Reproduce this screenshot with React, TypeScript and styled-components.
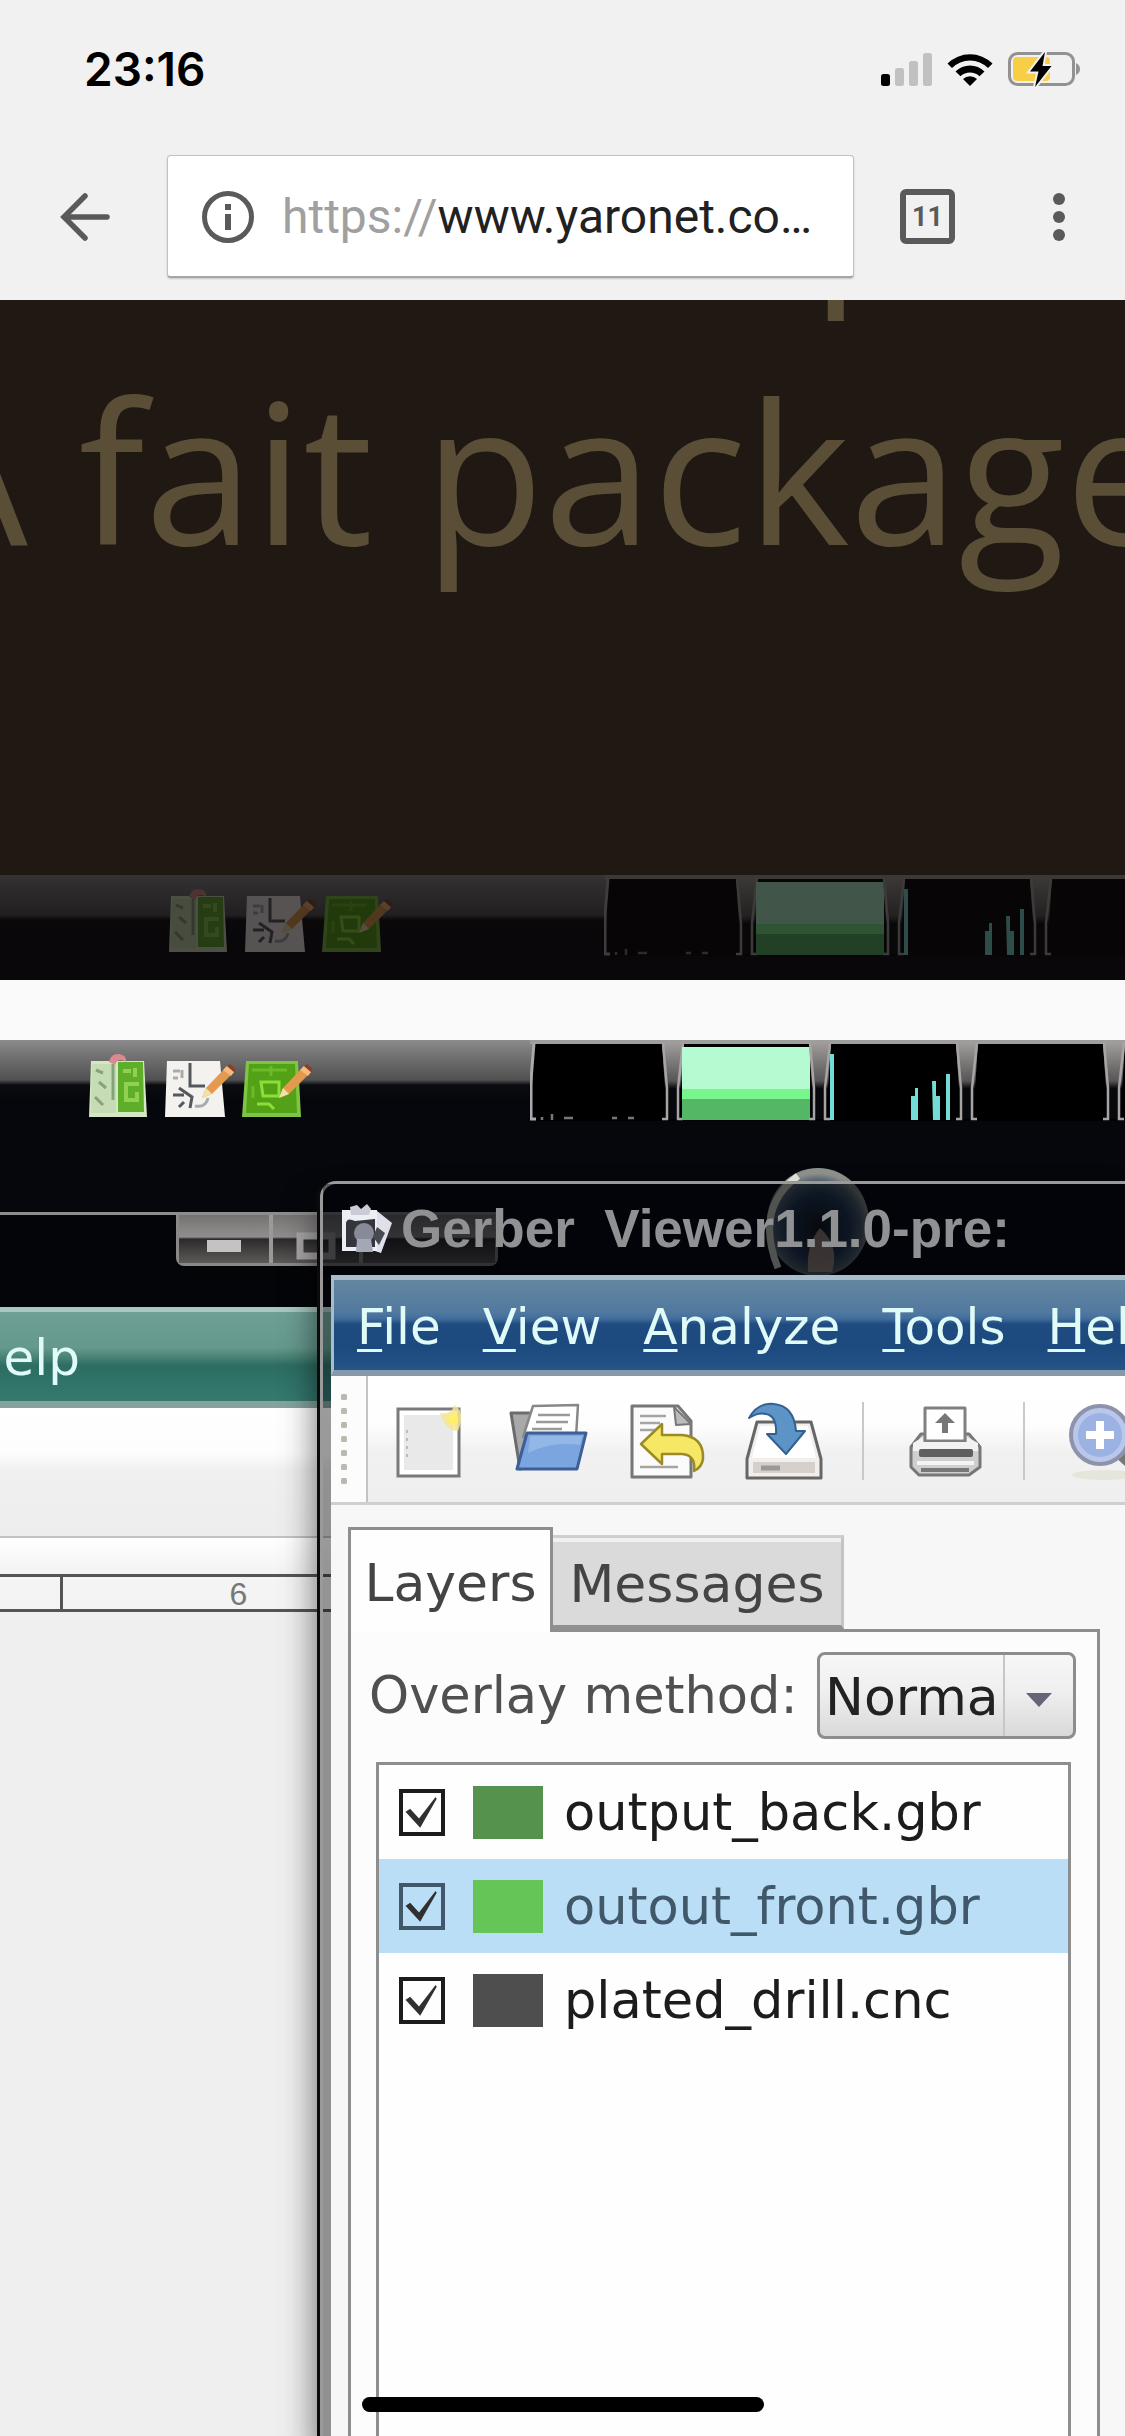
import React, { useState } from "react";
import styled, { createGlobalStyle, css } from "styled-components";

const UI = `"DejaVu Sans", sans-serif`;
const CHROME = `Roboto, "Liberation Sans", sans-serif`;

const Global = createGlobalStyle`
  * { box-sizing: border-box; }
  body { margin: 0; background: #fafafa; }
  button, select, input { font: inherit; color: inherit; margin: 0; }
  button { background: none; border: 0; padding: 0; }
`;

const Page = styled.div`
  position: relative;
  display: flex;
  flex-direction: column;
  min-height: 100vh;
  overflow: hidden;
`;

/* ---------- phone status bar and browser bar ---------- */

const TopArea = styled.header`
  background: #f1f1f1;
  height: 300px;
  flex: none;
  display: flex;
  flex-direction: column;
`;

const StatusBar = styled.div`
  height: 155px;
  padding: 0 44px 17px 84px;
  display: flex;
  align-items: center;
  justify-content: space-between;
`;

const Clock = styled.time`
  font: 600 46px/54px Inter, sans-serif;
  color: #000;
`;

const StatusIcons = styled.div`
  display: flex;
  align-items: center;
  gap: 15px;
`;

const BrowserBar = styled.div`
  display: flex;
  align-items: center;
  padding: 0 60px 0 58px;
`;

const IconButton = styled.button`
  display: grid;
  place-items: center;
  flex: none;
`;

const AddressBox = styled.button`
  flex: 1;
  min-width: 0;
  height: 123px;
  margin: 0 46px 0 55px;
  padding: 2px 36px 0 33px;
  display: flex;
  align-items: center;
  gap: 27px;
  background: #fff;
  border: 1px solid #c2c2c2;
  border-bottom: 2px solid #a5a5a5;
  border-radius: 4px;
  box-shadow: 0 1px 2px rgba(0, 0, 0, 0.18);
`;

const Url = styled.span`
  display: flex;
  font: 400 48px/60px ${CHROME};
  white-space: nowrap;
`;

const Scheme = styled.span`
  color: #a0a0a0;
`;

const Host = styled.span`
  color: #212121;
`;

const TabCount = styled.button`
  flex: none;
  width: 55px;
  height: 55px;
  margin-right: 98px;
  border: 6px solid #5a5a5a;
  border-radius: 6px;
  font: 700 27px/42px ${CHROME};
  color: #5a5a5a;
  text-align: center;
`;

/* ---------- page content ---------- */

const Quote = styled.section`
  flex: none;
  height: 680px;
  background: #201812;
  overflow: hidden;
  display: flex;
  flex-direction: column;
  justify-content: space-between;
`;

const QuoteText = styled.div`
  margin: -237px 0 0 -96px;
  font: 400 196px/271px "Open Sans", "Noto Sans", sans-serif;
  color: #5a4e36;
  white-space: nowrap;
`;

const QuoteLine = styled.p<{ $indent?: number }>`
  margin: 0;
  padding-left: ${(p) => p.$indent ?? 0}px;
`;

const DimStrip = styled.div`
  background: #0b0808;
  height: 105px;
  overflow: hidden;

  & > * {
    opacity: 0.32;
  }
`;

const Gap = styled.div`
  flex: none;
  height: 60px;
  background: #fafafa;
`;

const Desktop = styled.main`
  position: relative;
  flex: 1;
  min-height: 1396px;
  overflow: hidden;
  background: #05070c;
`;

const Panel = styled.div<{ $start: number; $gap: number }>`
  height: 105px;
  display: flex;
  padding-left: ${(p) => p.$start}px;
  gap: ${(p) => p.$gap}px;
  background: linear-gradient(#8c8c8c 0, #787878 12px, #505050 40px, #0a0c0f 45px, #05070c 60px);

  & > svg {
    flex: none;
  }
`;

/* ---------- windows ---------- */

const Orb = styled.svg`
  position: absolute;
  left: 764px;
  top: 124px;
`;

const BackWindow = styled.section`
  position: absolute;
  left: 0;
  top: 172px;
  bottom: 0;
  width: 500px;
  display: flex;
  flex-direction: column;
  border-top: 3px solid #8d8d8d;
  background: #efefef;
`;

const BackTitle = styled.div`
  height: 92px;
  background: #040508;
  display: flex;
  justify-content: flex-end;
  align-items: flex-start;
  padding-right: 2px;
`;

const WindowButtons = styled.div`
  display: flex;
  border: 3px solid #8c8888;
  border-top: 0;
  border-radius: 0 0 8px 8px;
`;

const WindowButton = styled.button`
  width: 90px;
  height: 48px;
  display: grid;
  place-items: center;
  padding-top: 14px;
  background: linear-gradient(#757272 0, #918e8e 22px, #2c2b2b 24px, #5c5959 48px);

  & + & {
    border-left: 4px solid #9b9898;
  }
  &:last-child {
    width: 136px;
  }
`;

const MenuBar = styled.nav<{ $tone: "teal" | "blue" }>`
  display: flex;
  align-items: center;
  height: 101px;
  padding-top: 3px;
  font: 400 50px/60px ${UI};
  color: #dffaf7;
  white-space: nowrap;
  overflow: hidden;
  ${(p) =>
    p.$tone === "teal"
      ? css`
          border-top: 5px solid #a9c7c0;
          border-bottom: 7px solid #84a39d;
          background: linear-gradient(#6f9f95 0, #65998d 40%, #458073 52%, #2d6d62 60%, #35796f);
        `
      : css`
          padding-left: 23px;
          gap: 42px;
          border-top: 5px solid #a9bccb;
          border-left: 3px solid #a9bccb;
          border-bottom: 6px solid #8699aa;
          background: linear-gradient(#64879f 0, #51799f 36%, #416d9d 43%, #1f4b80 49%, #1c4a7e 75%, #265488);
        `}
`;

const MenuItem = styled.button`
  flex: none;
`;

const Mnemonic = styled.span`
  text-decoration: underline;
  text-decoration-thickness: 3px;
  text-underline-offset: 5px;
  text-decoration-skip-ink: none;
`;

const BackMenuItem = styled(MenuItem)`
  margin-left: -34px;
`;

const BackToolbar = styled.div`
  height: 130px;
  border-bottom: 2px solid #c2c2c2;
  background: linear-gradient(#ffffff 0, #fdfdfd 45px, #f0f0f0 62px, #ededed);
`;

const RulerGap = styled.div`
  height: 36px;
  background: linear-gradient(#fff, #f3f3f3);
`;

const Ruler = styled.div`
  height: 38px;
  border: solid #555;
  border-width: 3px 0;
  background: #f4f4f4;
  padding-left: 60px;
`;

const RulerCell = styled.div`
  height: 100%;
  width: 354px;
  border-left: 3px solid #555;
  text-align: center;
  font: 400 32px/34px "Liberation Sans", sans-serif;
  color: #777;
`;

const FrontWindow = styled.section`
  position: absolute;
  left: 320px;
  right: 0;
  top: 141px;
  bottom: 0;
  display: flex;
  flex-direction: column;
  padding-left: 8px;
  border: solid #9a9a9a;
  border-width: 3px 0 0 3px;
  border-radius: 16px 0 0 0;
  background: rgba(3, 5, 9, 0.4);
  box-shadow: -3px 0 0 #0b0b0b, -4px 24px 34px rgba(0, 0, 0, 0.55);
`;

const TitleBar = styled.div`
  flex: none;
  height: 91px;
  margin-left: -8px;
  padding: 0 0 2px 16px;
  display: flex;
  align-items: center;
  gap: 7px;
  background: rgba(2, 3, 6, 0.42);
`;

const Title = styled.h1`
  margin: 0;
  font: 700 53px/60px "Liberation Sans", Arial, sans-serif;
  color: #909193;
  white-space: pre;
`;

const Client = styled.div`
  flex: 1;
  min-height: 0;
  display: flex;
  flex-direction: column;
  background: #f7f7f7;
`;

const Toolbar = styled.div`
  flex: none;
  height: 129px;
  display: flex;
  align-items: center;
  border-bottom: 3px solid #cfcfcf;
  background: linear-gradient(#ffffff 0, #fefefe 38%, #f1f1f1 60%, #efefef);
  overflow: hidden;
`;

const Grip = styled.div`
  flex: none;
  align-self: stretch;
  width: 37px;
  padding: 17px 0 0 9px;
  border-right: 2px solid #c4c4c4;
  background: #fcfcfc;
`;

const Tools = styled.div`
  display: flex;
  align-items: center;
  gap: 38px;
  padding: 4px 0 0 22px;
`;

const ToolDivider = styled.span`
  flex: none;
  width: 2px;
  height: 78px;
  margin-right: 3px;
  background: #c9c9c9;
`;

const Tabs = styled.div`
  flex: none;
  display: flex;
  align-items: flex-end;
  padding: 22px 0 0 17px;
`;

const Tab = styled.button<{ $active?: boolean }>`
  font: 400 52px/62px ${UI};
  border: solid #8e8e8e;
  color: #444;
  ${(p) =>
    p.$active
      ? css`
          width: 205px;
          height: 105px;
          margin-bottom: -3px;
          padding-top: 3px;
          border-width: 3px 3px 0 3px;
          background: #fefefe;
          z-index: 1;
        `
      : css`
          width: 291px;
          height: 94px;
          padding-top: 5px;
          border-width: 3px 3px 4px 0;
          border-color: #cfcfcf #c4c4c4 #909090;
          background: #dadada;
          box-shadow: inset 0 4px 0 #f0f0f0;
        `}
`;

const TabPanel = styled.div`
  flex: 1;
  display: flex;
  flex-direction: column;
  margin: 0 25px 0 17px;
  padding: 20px 21px 0 18px;
  border: 3px solid #8e8e8e;
  border-bottom: 0;
  background: #fcfcfc;
`;

const Field = styled.div`
  display: flex;
  align-items: center;
  justify-content: space-between;
  padding-bottom: 23px;
  font: 400 51px/62px ${UI};
  color: #505050;
  white-space: nowrap;
`;

const SelectWrap = styled.div`
  position: relative;
  width: 259px;
  height: 87px;
  flex: none;
`;

const Select = styled.select`
  appearance: none;
  width: 100%;
  height: 100%;
  padding: 2px 0 0 5px;
  border: 3px solid #8d8d8d;
  border-radius: 8px;
  background: linear-gradient(#f7f7f7, #efefef 45%, #d9d9d9);
  font-size: 52px;
  color: #222;
`;

const SelectArrow = styled.span`
  position: absolute;
  right: 3px;
  top: 3px;
  bottom: 3px;
  width: 70px;
  display: grid;
  place-items: center;
  padding-top: 9px;
  border-left: 2px solid #c6c6c6;
  pointer-events: none;
`;

const LayerList = styled.ul`
  flex: 1;
  margin: 0 5px 0 7px;
  padding: 0;
  list-style: none;
  border: 3px solid #8e8e8e;
  border-bottom: 0;
  background: #fefefe;
`;

const LayerRow = styled.li<{ $selected?: boolean }>`
  height: 94px;
  display: flex;
  align-items: center;
  padding-left: 20px;
  background: ${(p) => (p.$selected ? "#b9def5" : "transparent")};
  color: ${(p) => (p.$selected ? "#40586a" : "#1c1c1c")};
`;

const Check = styled.input`
  appearance: none;
  width: 46px;
  height: 47px;
  border: 4px solid currentColor;
  background: no-repeat center / 38px 38px
    url("data:image/svg+xml,%3Csvg xmlns='http://www.w3.org/2000/svg' viewBox='0 0 38 38'%3E%3Cpath d='M4 19L7 17L16 27L33 5L17 33Z' fill='%23303030' stroke='%23303030' stroke-width='2'/%3E%3C/svg%3E");

  &:not(:checked) {
    background: none;
  }
`;

const Swatch = styled.span<{ $color: string }>`
  width: 70px;
  height: 53px;
  margin: 0 21px 0 28px;
  background: ${(p) => p.$color};
`;

const LayerName = styled.label`
  padding-top: 2px;
  font: 400 51px/62px ${UI};
`;

const HomeIndicator = styled.div`
  position: absolute;
  left: 362px;
  bottom: 24px;
  width: 402px;
  height: 15px;
  border-radius: 8px;
  background: #000;
`;

/* ---------- drawings ---------- */

const Signal = () => (
  <svg width="51" height="33" viewBox="0 0 51 33" aria-hidden>
    <rect x="0" y="21" width="9" height="12" rx="2.5" fill="#000" />
    <g fill="#c1c1c1">
      <rect x="14" y="15" width="9" height="18" rx="2.5" />
      <rect x="28" y="8" width="9" height="25" rx="2.5" />
      <rect x="42" y="0" width="9" height="33" rx="2.5" />
    </g>
  </svg>
);

const Wifi = () => (
  <svg width="46" height="33" viewBox="0 0 46 33" aria-hidden>
    <path d="M0.500 10.500A32 32 0 0 1 45.500 10.500L41 15A25.500 25.500 0 0 0 5 15Z" />
    <path d="M8.500 18.500A20.500 20.500 0 0 1 37.500 18.500L32.500 23.200A14 14 0 0 0 13.500 23.200Z" />
    <path d="M16 26A10 10 0 0 1 30 26L23 33Z" />
  </svg>
);

const Battery = () => (
  <svg width="73" height="36" viewBox="0 0 73 36" aria-hidden>
    <rect x="1.500" y="2.500" width="64" height="31" rx="8" fill="none" stroke="#929292" strokeWidth="3" />
    <path d="M68 12Q72 14 72 18T68 24Z" fill="#929292" />
    <rect x="5" y="6" width="37" height="24" rx="4" fill="#f8ce46" />
    <path d="M37 1L22 20.500H30.500L27 36L43.500 15H34.500Z" fill="#000" stroke="#f1f1f1" strokeWidth="4" paintOrder="stroke" />
  </svg>
);

const BackArrow = () => (
  <svg width="54" height="54" viewBox="0 0 54 54" fill="none" stroke="#5a5a5a" strokeWidth="5.500" strokeLinecap="round" aria-hidden>
    <path d="M49 27H6M27 6L6 27L27 48" />
  </svg>
);

const InfoSvg = styled.svg`
  flex: none;
`;

const Info = () => (
  <InfoSvg width="54" height="54" viewBox="0 0 54 54" aria-hidden>
    <circle cx="27" cy="27" r="23.500" fill="none" stroke="#5a5a5a" strokeWidth="5" />
    <path d="M24 14h6v6h-6zM24 24h6v16h-6z" fill="#5a5a5a" />
  </InfoSvg>
);

const Dots = () => (
  <svg width="12" height="48" viewBox="0 0 12 48" fill="#5a5a5a" aria-hidden>
    <circle cx="6" cy="6" r="6" />
    <circle cx="6" cy="24" r="6" />
    <circle cx="6" cy="42" r="6" />
  </svg>
);

const Pencil = ({ x }: { x: number }) => (
  <g transform={`translate(${x} 0)`}>
    <path d="M62 26L69 32L47 54L37 58L41 48Z" fill="#e39a4e" />
    <path d="M62 26L69 32L66 36L58 30Z" fill="#f6b980" />
    <path d="M41 48L47 54L37 58Z" fill="#f3e2a8" />
    <path d="M69 32L71 29L65 24L62 26Z" fill="#8a4226" />
  </g>
);

const LauncherIcons = () => (
  <svg width="226" height="90" viewBox="0 0 226 90" aria-hidden>
    <path d="M2 21H55L58 77H0Z" fill="#d5e8c4" />
    <path d="M3 24H27V73H2Z" fill="#c6dcb4" />
    <path d="M29 22H54L55 72H29Z" fill="#5fae2b" />
    <path d="M7 30l7 3M10 42l7 6M6 57l8 8M24 24v36" stroke="#86a37a" strokeWidth="3" fill="none" />
    <path d="M50 44H37V60H48V52M34 31h8M46 28v9" stroke="#92d050" strokeWidth="4" fill="none" />
    <path d="M20 22Q22 13 30 14T37 22Q29 17 26 25Z" fill="#d98a8c" />
    <path d="M78 21H131L136 77H76Z" fill="#f4f2ef" />
    <path d="M101 23V46H116M84 55H95M90 48L103 57L101 68M90 67L95 62" stroke="#55585c" strokeWidth="3" fill="none" />
    <path d="M84 31h7M93 30v8M84 38h5M106 66q11 2 13-8" stroke="#a9abad" strokeWidth="3" fill="none" />
    <Pencil x={76} />
    <path d="M157 21H209L212 77H153Z" fill="#7fc444" />
    <path d="M160 24H206L208 73H157Z" fill="#52a117" />
    <path d="M172 42H190V56H174ZM168 64h12l5 5" stroke="#8ede38" strokeWidth="3" fill="none" />
    <path d="M163 30H198M164 46v12M182 26v10" stroke="#6bba28" strokeWidth="3" fill="none" />
    <Pencil x={153} />
  </svg>
);

const Divider = ({ x }: { x: number }) => (
  <g>
    <path d={`M${x} 3H${x + 22}L${x + 17} 79H${x + 5}Z`} fill="url(#sep)" />
    <path
      d={`M${x + 1} 3L${x + 5} 48V79H${x}M${x + 21} 3L${x + 16} 48V79H${x + 21}`}
      fill="none"
      stroke="#a8a4a5"
      strokeWidth="2.500"
    />
  </g>
);

const Graphs = () => (
  <svg width="740" height="90" viewBox="0 0 740 90" aria-hidden>
    <defs>
      <linearGradient id="sep" x1="0" y1="0" x2="0" y2="1">
        <stop offset="0" stopColor="#a09c9c" />
        <stop offset="0.500" stopColor="#575555" />
        <stop offset="0.600" stopColor="#07080b" />
      </linearGradient>
    </defs>
    <rect x="3" y="3" width="737" height="78" fill="#000" />
    <rect width="740" height="4" fill="#a09d9d" />
    <path d="M4 3L1 40V79H6" fill="none" stroke="#aaa" strokeWidth="3" />
    <path d="M12 77v3M22 74v6M34 78h9M82 78h5M98 78h6" stroke="#777" strokeWidth="2.500" />
    <Divider x={132} />
    <rect x="152" y="7" width="128" height="42" fill="#b4fbd1" />
    <rect x="152" y="49" width="128" height="10" fill="#78f58d" />
    <rect x="152" y="59" width="128" height="21" fill="#54b766" />
    <Divider x={279} />
    <g fill="#74dcd6">
      <rect x="300" y="14" width="4" height="66" />
      <path d="M381 56h4v-8h3v32h-7zM402 41h4v15h4v24h-7zM416 34h4v46h-4z" />
    </g>
    <Divider x={426} />
    <Divider x={573} />
  </svg>
);

const SystemPanel = ({ start, gap }: { start: number; gap: number }) => (
  <Panel $start={start} $gap={gap}>
    <LauncherIcons />
    <Graphs />
  </Panel>
);

const OrbDrawing = () => (
  <Orb width="108" height="112" viewBox="0 0 108 112" aria-hidden>
    <defs>
      <radialGradient id="orb" cx="0.500" cy="0.550" r="0.500">
        <stop offset="0" stopColor="#14161a" />
        <stop offset="0.600" stopColor="#1f3a55" />
        <stop offset="0.850" stopColor="#4e6272" />
        <stop offset="1" stopColor="#8f918c" />
      </radialGradient>
    </defs>
    <ellipse cx="54" cy="58" rx="51" ry="54" fill="url(#orb)" />
    <path d="M44 108Q42 80 56 64Q76 82 68 108Z" fill="#c0a48e" opacity="0.800" />
    <path d="M14 104Q-10 44 34 12" fill="none" stroke="#e4e8da" strokeWidth="7" />
  </Orb>
);

const AppIcon = () => (
  <svg width="55" height="52" viewBox="0 0 55 52" aria-hidden>
    <path d="M38 8L53 20L42 50L30 46Z" fill="#dfe0ea" />
    <path d="M3 7H38V48H3Z" fill="#eceef6" />
    <path d="M7 20Q8 14 16 18L36 16V44H7Z" fill="#34363c" />
    <path d="M11 4L18 2L22 6L28 1L32 6L30 12H12Z" fill="#c9cbd6" />
    <circle cx="25" cy="30" r="10" fill="#878b99" />
    <path d="M18 36H32L34 49H17Z" fill="#a4a8b6" />
    <path d="M38 24L46 30L40 42L34 34Z" fill="#484a52" />
  </svg>
);

const GripDots = () => (
  <svg width="14" height="96" viewBox="0 0 14 96" fill="#b9b9b0" aria-hidden>
    {[4, 18, 32, 46, 60, 74, 88].map((y) => (
      <rect key={y} x="1" y={y - 3} width="6" height="6" rx="1.500" />
    ))}
  </svg>
);

const NewIcon = () => (
  <svg width="80" height="80" viewBox="0 0 80 80" aria-hidden>
    <rect x="8" y="8" width="61" height="67" fill="#fff" stroke="#7a7a7a" strokeWidth="3" />
    <rect x="14" y="14" width="49" height="55" fill="#e9e9e9" />
    <path d="M17 29v30" stroke="#bbb" strokeWidth="2" strokeDasharray="3 5" />
    <path d="M50 12Q62 14 64 4Q76 10 68 30Q56 30 50 12Z" fill="#f6e58c" opacity="0.850" />
    <circle cx="63" cy="18" r="5" fill="#fff16a" />
  </svg>
);

const OpenIcon = () => (
  <svg width="80" height="80" viewBox="0 0 80 80" strokeLinejoin="round" aria-hidden>
    <path d="M3 12H22L26 16H40V60L12 68Z" fill="#a9a9a9" stroke="#6c6c6c" strokeWidth="3" />
    <path d="M25 5L70 4L68 36H15Z" fill="#fff" stroke="#888" strokeWidth="2.500" />
    <path d="M30 14H62M28 21H60M24 28h30" stroke="#999" strokeWidth="2.500" />
    <path d="M19 32H78L69 68H9Z" fill="#7ba5de" stroke="#3c5f96" strokeWidth="3" />
    <path d="M22 35H74L72 44Q44 40 20 52Z" fill="#93b8e8" />
  </svg>
);

const RevertIcon = () => (
  <svg width="80" height="80" viewBox="0 0 80 80" strokeLinejoin="round" aria-hidden>
    <path d="M6 5H52L65 20V76H6Z" fill="#fbfbfb" stroke="#777" strokeWidth="3" />
    <path d="M48 6L50 24L65 23Z" fill="#bbb" stroke="#777" strokeWidth="2" />
    <path d="M14 15H40M14 22H34M14 29h22M14 66H52" stroke="#a5a5a5" strokeWidth="2.500" />
    <path d="M15 43L36 23V34H56Q78 36 77 58Q76 66 68 70Q70 54 56 53H36V63Z" fill="#f6e765" stroke="#9a8a28" strokeWidth="2.500" />
  </svg>
);

const SaveIcon = () => (
  <svg width="80" height="80" viewBox="0 0 80 80" strokeLinejoin="round" aria-hidden>
    <path d="M13 21H67L77 58V77H3V58Z" fill="#f1eeec" stroke="#666" strokeWidth="3" />
    <path d="M16 25H64L72 57H8Z" fill="#fff" />
    <rect x="9" y="61" width="62" height="11" fill="#d6d0cc" />
    <path d="M17 67H36" stroke="#999" strokeWidth="5" />
    <path d="M5 17Q14 1 30 3Q50 5 52 30H61L42 53L23 33H32Q33 15 22 13Q14 11 5 17Z" fill="#5c94c8" stroke="#33618f" strokeWidth="2" />
  </svg>
);

const PrintIcon = () => (
  <svg width="80" height="80" viewBox="0 0 80 80" strokeLinejoin="round" aria-hidden>
    <path d="M16 33H64L75 46V66L64 74H14L6 66V46Z" fill="#cfcfcf" stroke="#777" strokeWidth="3" />
    <path d="M20 7H60V40H20Z" fill="#fff" stroke="#808080" strokeWidth="3" />
    <path d="M40 12L50 22H43V32H37V22H30Z" fill="#777" />
    <path d="M8 42L18 36V41H62V36L73 42V50H8Z" fill="#f2f2f2" />
    <rect x="14" y="48" width="54" height="8" rx="2" fill="#5f5f5f" />
    <path d="M12 62H69" stroke="#f4f4f4" strokeWidth="4" />
    <path d="M16 69H64" stroke="#777" strokeWidth="4" />
  </svg>
);

const ZoomIcon = () => (
  <svg width="80" height="80" viewBox="0 0 80 80" aria-hidden>
    <ellipse cx="38" cy="74" rx="32" ry="5" fill="#e6e5dc" />
    <path d="M56 54L80 76" stroke="#777" strokeWidth="12" />
    <circle cx="34" cy="34" r="29" fill="#b9c7ea" stroke="#8d93ab" strokeWidth="4" />
    <circle cx="34" cy="34" r="22" fill="#8fa9de" opacity="0.700" />
    <path d="M34 20V48M20 34H48" stroke="#fff" strokeWidth="8" />
  </svg>
);

const Caret = () => (
  <svg width="26" height="14" viewBox="0 0 26 14" fill="#65657a" aria-hidden>
    <path d="M0 0H26L13 14Z" />
  </svg>
);

/* ---------- data ---------- */

const MENU = ["File", "View", "Analyze", "Tools", "Help"];

const LAYERS = [
  { id: "back", name: "output_back.gbr", color: "#55924e", selected: false },
  { id: "front", name: "outout_front.gbr", color: "#66c557", selected: true },
  { id: "drill", name: "plated_drill.cnc", color: "#4e4e4e", selected: false },
];

const TOOLS = [
  { label: "New", icon: <NewIcon />, divided: false },
  { label: "Open", icon: <OpenIcon />, divided: false },
  { label: "Revert", icon: <RevertIcon />, divided: false },
  { label: "Save", icon: <SaveIcon />, divided: true },
  { label: "Print", icon: <PrintIcon />, divided: true },
  { label: "Zoom in", icon: <ZoomIcon />, divided: false },
];

export default function App() {
  const [tab, setTab] = useState("Layers");

  return (
    <Page>
      <Global />
      <TopArea>
        <StatusBar>
          <Clock>23:16</Clock>
          <StatusIcons>
            <Signal />
            <Wifi />
            <Battery />
          </StatusIcons>
        </StatusBar>
        <BrowserBar>
          <IconButton aria-label="Back">
            <BackArrow />
          </IconButton>
          <AddressBox>
            <Info />
            <Url>
              <Scheme>https://</Scheme>
              <Host>www.yaronet.co…</Host>
            </Url>
          </AddressBox>
          <TabCount>11</TabCount>
          <IconButton aria-label="More">
            <Dots />
          </IconButton>
        </BrowserBar>
      </TopArea>

      <Quote>
        <QuoteText>
          <QuoteLine $indent={907}>p</QuoteLine>
          <QuoteLine>A fait package</QuoteLine>
        </QuoteText>
        <DimStrip>
          <SystemPanel start={169} gap={209} />
        </DimStrip>
      </Quote>
      <Gap />

      <Desktop>
        <SystemPanel start={89} gap={215} />

        <BackWindow>
          <BackTitle>
            <WindowButtons>
              <WindowButton aria-label="Minimise">
                <svg width="34" height="12" aria-hidden>
                  <rect width="34" height="12" fill="#c4c2c2" />
                </svg>
              </WindowButton>
              <WindowButton aria-label="Maximise">
                <svg width="40" height="28" aria-hidden>
                  <rect x="4" y="4" width="32" height="20" fill="none" stroke="#a9a7a7" strokeWidth="7" />
                </svg>
              </WindowButton>
              <WindowButton aria-label="Close" />
            </WindowButtons>
          </BackTitle>
          <MenuBar $tone="teal">
            <BackMenuItem>Help</BackMenuItem>
          </MenuBar>
          <BackToolbar />
          <RulerGap />
          <Ruler>
            <RulerCell>6</RulerCell>
          </Ruler>
        </BackWindow>

        <OrbDrawing />

        <FrontWindow>
          <TitleBar>
            <AppIcon />
            <Title>{"Gerber  Viewer1.1.0-pre:"}</Title>
          </TitleBar>
          <Client>
            <MenuBar $tone="blue">
              {MENU.map((item) => (
                <MenuItem key={item}>
                  <Mnemonic>{item[0]}</Mnemonic>
                  {item.slice(1)}
                </MenuItem>
              ))}
            </MenuBar>
            <Toolbar>
              <Grip>
                <GripDots />
              </Grip>
              <Tools>
                {TOOLS.map((tool) => (
                  <React.Fragment key={tool.label}>
                    <IconButton aria-label={tool.label}>{tool.icon}</IconButton>
                    {tool.divided && <ToolDivider />}
                  </React.Fragment>
                ))}
              </Tools>
            </Toolbar>
            <Tabs role="tablist">
              {["Layers", "Messages"].map((name) => (
                <Tab key={name} role="tab" aria-selected={tab === name} $active={tab === name} onClick={() => setTab(name)}>
                  {name}
                </Tab>
              ))}
            </Tabs>
            <TabPanel role="tabpanel">
              <Field>
                <label htmlFor="overlay">Overlay method:</label>
                <SelectWrap>
                  <Select id="overlay">
                    <option>Norma</option>
                  </Select>
                  <SelectArrow>
                    <Caret />
                  </SelectArrow>
                </SelectWrap>
              </Field>
              <LayerList>
                {LAYERS.map((layer) => (
                  <LayerRow key={layer.id} $selected={layer.selected}>
                    <Check type="checkbox" id={layer.id} defaultChecked />
                    <Swatch $color={layer.color} />
                    <LayerName htmlFor={layer.id}>{layer.name}</LayerName>
                  </LayerRow>
                ))}
              </LayerList>
            </TabPanel>
          </Client>
        </FrontWindow>
      </Desktop>
      <HomeIndicator />
    </Page>
  );
}
